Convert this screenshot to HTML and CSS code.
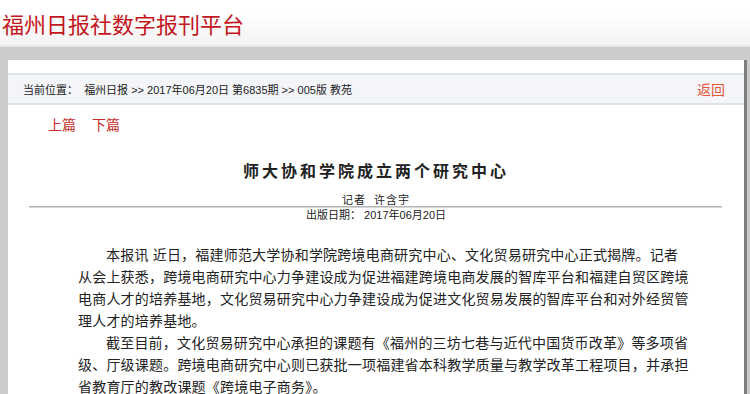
FILE: index.html
```
<!DOCTYPE html>
<html lang="zh-CN">
<head>
  <meta charset="UTF-8">
  <meta name="viewport" content="width=device-width, initial-scale=1.0">
  <title>福州日报社数字报刊平台</title>
  <link rel="stylesheet" href="styles.css">
</head>
<body>

  <header class="site-head">
    <div class="logo">福州日报社数字报刊平台</div>
  </header>

  <div class="page">
    <div class="crumb">
      <div class="crumb-path">
        当前位置：&nbsp; <a href="#">福州日报</a> &gt;&gt; <a href="#">2017年06月20日 第6835期</a> &gt;&gt; <a href="#">005版 教苑</a>
      </div>
      <a class="back" href="#">返回</a>
    </div>

    <div class="pager">
      <a href="#">上篇</a>
      <a href="#">下篇</a>
    </div>

    <h1 class="art-title">师大协和学院成立两个研究中心</h1>
    <div class="author">记者&nbsp; 许含宇</div>
    <div class="rule"></div>
    <div class="pubdate">出版日期： 2017年06月20日</div>

    <div class="art-body">
      <p>本报讯 近日，福建师范大学协和学院跨境电商研究中心、文化贸易研究中心正式揭牌。记者从会上获悉，跨境电商研究中心力争建设成为促进福建跨境电商发展的智库平台和福建自贸区跨境电商人才的培养基地，文化贸易研究中心力争建设成为促进文化贸易发展的智库平台和对外经贸管理人才的培养基地。</p>
      <p>截至目前，文化贸易研究中心承担的课题有《福州的三坊七巷与近代中国货币改革》等多项省级、厅级课题。跨境电商研究中心则已获批一项福建省本科教学质量与教学改革工程项目，并承担省教育厅的教改课题《跨境电子商务》。</p>
    </div>
  </div>

</body>
</html>
```

FILE: styles.css
```
body {
  margin: 0;
  padding: 0;
  background-color: #cccccc;
  font-family: "Liberation Sans", "Noto Sans CJK SC", sans-serif;
  color: #333;
  overflow: hidden;
}

a {
  text-decoration: none;
  color: inherit;
}

.site-head {
  height: 45px;
  background: linear-gradient(to bottom, #ffffff 0%, #ffffff 30%, #f3f3f3 100%);
  border-bottom: 2px solid #e8e8e8;
}

.site-head .logo {
  padding-left: 2px;
  line-height: 46px;
  font-family: "Noto Sans CJK SC", sans-serif;
  font-size: 22px;
  color: #c3161d;
}

.page {
  margin: 13px 3px 0 8px;
  padding-top: 13px;
  min-height: calc(100vh - 73px);
  background-color: #fff;
  border-right: 3px solid #7c7c7c;
}

/* breadcrumb bar */
.crumb {
  display: flex;
  justify-content: space-between;
  align-items: center;
  height: 28px;
  padding: 0 19px 0 15px;
  background-color: #f4f5f9;
  border-top: 2px solid #e1e3ea;
  border-bottom: 2px solid #e1e3ea;
}

.crumb-path {
  font-size: 11px;
  color: #222;
}

.crumb .back {
  font-size: 14px;
  color: #e8553a;
}

.pager {
  display: flex;
  gap: 16px;
  margin-top: 10px;
  padding-left: 40px;
  line-height: 20px;
  font-size: 14px;
}

.pager a {
  color: #c4302b;
}

.art-title {
  margin: 23px 0 0;
  text-align: center;
  line-height: 24px;
  font-size: 16px;
  font-weight: bold;
  letter-spacing: 3px;
  color: #222;
  font-family: "Noto Sans CJK SC", sans-serif;
}

.author {
  margin-top: 12px;
  text-align: center;
  line-height: 12px;
  font-size: 11px;
  letter-spacing: 1px;
  color: #222;
}

.rule {
  height: 2px;
  margin: 0 22px 0 21px;
  background: linear-gradient(to bottom, #b4b4b4 0%, #b4b4b4 50%, #d6d6d6 50%);
}

.pubdate {
  text-align: center;
  line-height: 14px;
  font-size: 11px;
  color: #222;
}

.art-body {
  width: 612px;
  margin-top: 22px;
  padding-left: 70px;
}

.art-body p {
  margin: 0;
  text-indent: 2em;
  font-size: 14px;
  line-height: 22px;
  letter-spacing: 0.2px;
  color: #222;
}
```
